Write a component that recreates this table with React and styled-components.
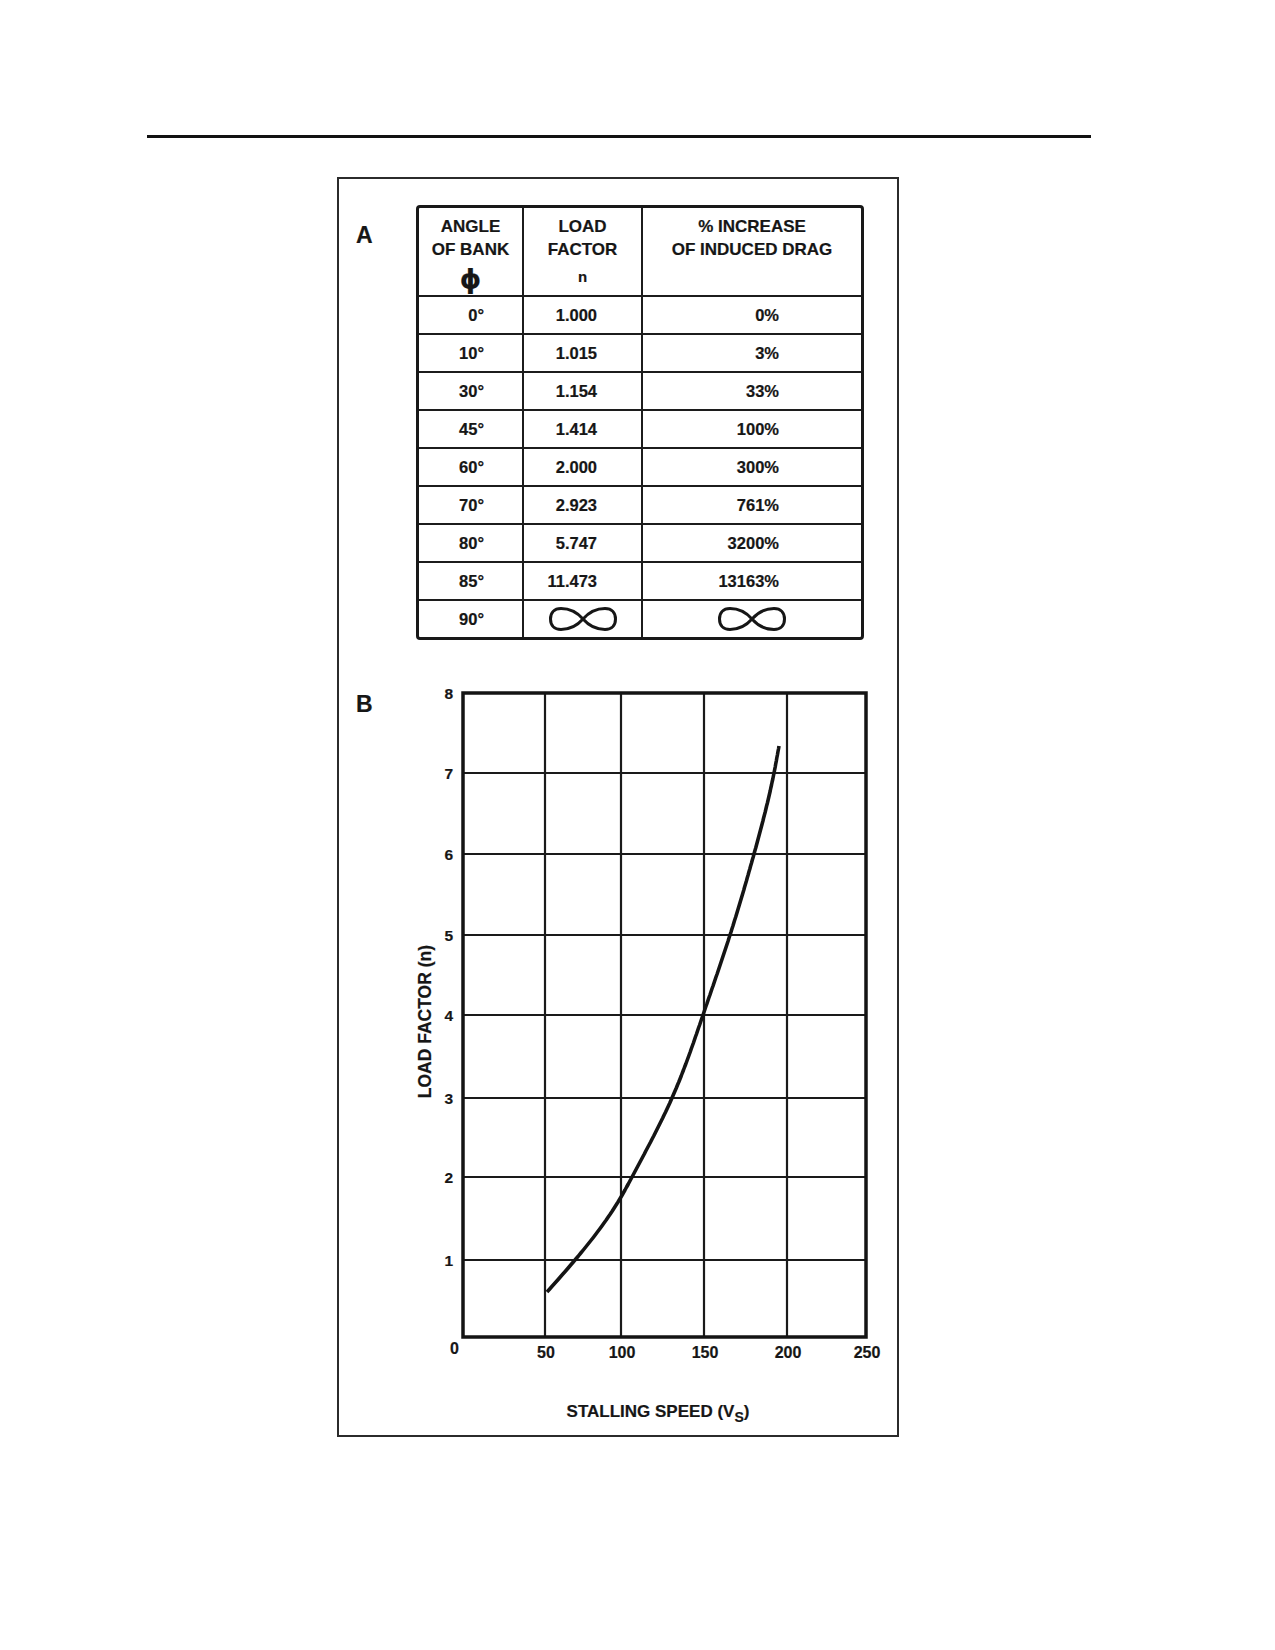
import React from 'react';
import styled, { createGlobalStyle } from 'styled-components';

const Global = createGlobalStyle`
  html, body { margin: 0; padding: 0; background: #fff; }
  body {
    font-family: "Liberation Sans", Arial, Helvetica, sans-serif;
    color: #161616;
    -webkit-text-stroke: 0.2px #161616;
  }
  #root { width: 1275px; min-height: 1650px; }
`;

const Page = styled.div`
  width: 1275px;
  height: 1650px;
  overflow: hidden;
`;

const Rule = styled.div`
  margin: 135px 0 0 147px;
  width: 944px;
  height: 3px;
  background: #111;
`;

const Frame = styled.div`
  margin: 39px 0 0 337px;
  width: 562px;
  height: 1260px;
  box-sizing: border-box;
  border: 2px solid #2b2b2b;
  padding-top: 26px;
`;

const Section = styled.section`
  display: flex;
  align-items: flex-start;
  padding-left: 17px;
  margin-top: ${(p) => p.$mt || 0}px;
`;

const Letter = styled.div`
  flex: none;
  width: ${(p) => p.$w}px;
  margin-top: ${(p) => p.$mt}px;
  font-size: 23px;
  line-height: 23px;
  font-weight: 700;
`;

const Table = styled.div`
  width: 448px;
  box-sizing: border-box;
  border: 3px solid #181818;
  border-radius: 4px;
`;

const Row = styled.div`
  display: grid;
  grid-template-columns: 103px 119px 220px;
  height: ${(p) => p.$h}px;
  & + & {
    border-top: 2px solid #1c1c1c;
  }
`;

const Cell = styled.div`
  display: flex;
  align-items: center;
  justify-content: ${(p) => (p.$center ? 'center' : 'flex-end')};
  padding-right: ${(p) => p.$pr || 0}px;
  font-size: 16.5px;
  font-weight: 700;
  & + & {
    border-left: 2px solid #1c1c1c;
  }
`;

const HeadCell = styled.div`
  display: flex;
  flex-direction: column;
  align-items: center;
  padding-top: 8px;
  font-weight: 700;
  & + & {
    border-left: 2px solid #1c1c1c;
  }
`;

const HeadLine = styled.div`
  font-size: 17px;
  line-height: 22.5px;
  white-space: nowrap;
`;

const Phi = styled.div`
  font-family: "DejaVu Sans", sans-serif;
  font-size: 27px;
  line-height: 35px;
  font-weight: 700;
`;

const SmallN = styled.div`
  font-size: 15px;
  line-height: 32px;
`;

const Chart = styled.div`
  display: flex;
  align-items: flex-start;
`;

const YTitleBox = styled.div`
  flex: none;
  width: 22px;
  height: 650px;
  display: flex;
  align-items: center;
  justify-content: center;
  padding-top: 14px;
  box-sizing: border-box;
`;

const YTitle = styled.div`
  writing-mode: vertical-rl;
  transform: rotate(180deg);
  font-size: 17.5px;
  line-height: 20px;
  font-weight: 700;
  white-space: nowrap;
`;

const YAxis = styled.div`
  flex: none;
  width: 24px;
  display: flex;
  flex-direction: column;
`;

const YTicks = styled.div`
  height: 650px;
  box-sizing: border-box;
  padding-top: 4px;
  display: flex;
  flex-direction: column;
`;

const YTick = styled.div`
  flex: none;
  height: ${(p) => p.$h}px;
  padding-right: 7px;
  text-align: right;
`;

const YLabel = styled.div`
  margin-top: -9px;
  font-size: 15.5px;
  line-height: 18px;
  font-weight: 700;
`;

const Zero = styled.div`
  text-align: right;
  padding-right: 1px;
  font-size: 16px;
  line-height: 18px;
  font-weight: 700;
`;

const PlotColumn = styled.div`
  flex: none;
  width: 409px;
  display: flex;
  flex-direction: column;
`;

const Plot = styled.svg`
  display: block;
`;

const XTicks = styled.div`
  display: flex;
  align-items: flex-start;
  height: 26px;
  box-sizing: border-box;
  padding: 4px 0 0 4px;
`;

const XTick = styled.div`
  flex: none;
  width: ${(p) => p.$w}px;
  display: flex;
  justify-content: flex-end;
`;

const XLabel = styled.span`
  display: block;
  font-size: 16px;
  line-height: 18px;
  font-weight: 700;
  transform: translateX(50%);
`;

const XTitle = styled.div`
  margin-top: 36px;
  padding-right: 13px;
  text-align: center;
  font-size: 17px;
  line-height: 20px;
  font-weight: 700;
  white-space: nowrap;
`;

const Sub = styled.span`
  font-size: 14px;
  vertical-align: -5px;
`;

const rows = [
  ['0°', '1.000', '0%'],
  ['10°', '1.015', '3%'],
  ['30°', '1.154', '33%'],
  ['45°', '1.414', '100%'],
  ['60°', '2.000', '300%'],
  ['70°', '2.923', '761%'],
  ['80°', '5.747', '3200%'],
  ['85°', '11.473', '13163%'],
];

const InfinitySign = () => (
  <svg width="70" height="26" viewBox="0 0 70 26" role="img" aria-label="infinity">
    <title>∞</title>
    <path
      d="M35,13 C42,5 49,2.5 57,2.5 C64,2.5 67.5,7 67.5,13 C67.5,19 64,23.5 57,23.5 C49,23.5 42,21 35,13 C28,5 21,2.5 13,2.5 C6,2.5 2.5,7 2.5,13 C2.5,19 6,23.5 13,23.5 C21,23.5 28,21 35,13 Z"
      fill="none"
      stroke="#161616"
      strokeWidth="3"
      strokeLinejoin="round"
    />
  </svg>
);

const XS = [0, 82, 158, 241, 324, 403];
const YS = [0, 80, 161, 242, 322, 405, 484, 567, 644];
const YLABELS = ['8', '7', '6', '5', '4', '3', '2', '1'];
const XLABELS = ['50', '100', '150', '200', '250'];

// curve samples: [y, x] in plot pixels
const PTS = [
  [53, 316], [80, 311], [161, 291], [242, 267], [322, 240],
  [405, 209], [484, 169], [504, 158], [567, 112], [599, 84],
];

function naturalSpline(ts, vs) {
  const n = ts.length - 1;
  const h = [];
  for (let i = 0; i < n; i++) h[i] = ts[i + 1] - ts[i];
  const al = [0];
  for (let i = 1; i < n; i++) {
    al[i] = (3 / h[i]) * (vs[i + 1] - vs[i]) - (3 / h[i - 1]) * (vs[i] - vs[i - 1]);
  }
  const l = [1], mu = [0], z = [0];
  for (let i = 1; i < n; i++) {
    l[i] = 2 * (ts[i + 1] - ts[i - 1]) - h[i - 1] * mu[i - 1];
    mu[i] = h[i] / l[i];
    z[i] = (al[i] - h[i - 1] * z[i - 1]) / l[i];
  }
  const c = [], b = [], d = [];
  c[n] = 0;
  for (let j = n - 1; j >= 0; j--) {
    c[j] = z[j] - mu[j] * c[j + 1];
    b[j] = (vs[j + 1] - vs[j]) / h[j] - (h[j] * (c[j + 1] + 2 * c[j])) / 3;
    d[j] = (c[j + 1] - c[j]) / (3 * h[j]);
  }
  return (t) => {
    let i = 0;
    while (i < n - 1 && t > ts[i + 1]) i++;
    const dt = t - ts[i];
    return vs[i] + b[i] * dt + c[i] * dt * dt + d[i] * dt * dt * dt;
  };
}

function curvePath() {
  const f = naturalSpline(PTS.map((p) => p[0]), PTS.map((p) => p[1]));
  const y0 = PTS[0][0];
  const y1 = PTS[PTS.length - 1][0];
  let d = '';
  for (let y = y0; y <= y1; y += 3) {
    d += `${d ? 'L' : 'M'}${f(y).toFixed(1)},${y}`;
  }
  d += `L${PTS[PTS.length - 1][1]},${y1}`;
  return d;
}

export default function App() {
  const curve = curvePath();
  return (
    <Page>
      <Global />
      <Rule />
      <Frame>
        <Section>
          <Letter $w={60} $mt={19}>A</Letter>
          <Table>
            <Row $h={87}>
              <HeadCell>
                <HeadLine>ANGLE</HeadLine>
                <HeadLine>OF BANK</HeadLine>
                <Phi>ϕ</Phi>
              </HeadCell>
              <HeadCell>
                <HeadLine>LOAD</HeadLine>
                <HeadLine>FACTOR</HeadLine>
                <SmallN>n</SmallN>
              </HeadCell>
              <HeadCell>
                <HeadLine>% INCREASE</HeadLine>
                <HeadLine>OF INDUCED DRAG</HeadLine>
              </HeadCell>
            </Row>
            {rows.map((r) => (
              <Row $h={36} key={r[0]}>
                <Cell $pr={38}>{r[0]}</Cell>
                <Cell $pr={44}>{r[1]}</Cell>
                <Cell $pr={82}>{r[2]}</Cell>
              </Row>
            ))}
            <Row $h={36}>
              <Cell $pr={38}>90°</Cell>
              <Cell $center>
                <InfinitySign />
              </Cell>
              <Cell $center>
                <InfinitySign />
              </Cell>
            </Row>
          </Table>
        </Section>

        <Section $mt={50}>
          <Letter $w={58} $mt={3}>B</Letter>
          <Chart>
            <YTitleBox>
              <YTitle>LOAD FACTOR (n)</YTitle>
            </YTitleBox>
            <YAxis>
              <YTicks>
                {YLABELS.map((l, i) => (
                  <YTick key={l} $h={(YS[i + 1] || 644) - YS[i]}>
                    <YLabel>{l}</YLabel>
                  </YTick>
                ))}
              </YTicks>
              <Zero>0</Zero>
            </YAxis>
            <PlotColumn>
              <Plot width="409" height="650" viewBox="0 0 409 650">
                <g transform="translate(3,3)">
                  {XS.slice(1, -1).map((x) => (
                    <line key={'v' + x} x1={x} y1={0} x2={x} y2={644} stroke="#1a1a1a" strokeWidth="2.2" />
                  ))}
                  {YS.slice(1, -1).map((y) => (
                    <line key={'h' + y} x1={0} y1={y} x2={403} y2={y} stroke="#1a1a1a" strokeWidth="2.2" />
                  ))}
                  <rect x="0" y="0" width="403" height="644" fill="none" stroke="#141414" strokeWidth="3.5" />
                  <path d={curve} fill="none" stroke="#141414" strokeWidth="3.6" strokeLinejoin="round" />
                </g>
              </Plot>
              <XTicks>
                {XLABELS.map((l, i) => (
                  <XTick key={l} $w={XS[i + 1] - XS[i]}>
                    <XLabel>{l}</XLabel>
                  </XTick>
                ))}
              </XTicks>
              <XTitle>
                STALLING SPEED (V<Sub>S</Sub>)
              </XTitle>
            </PlotColumn>
          </Chart>
        </Section>
      </Frame>
    </Page>
  );
}
